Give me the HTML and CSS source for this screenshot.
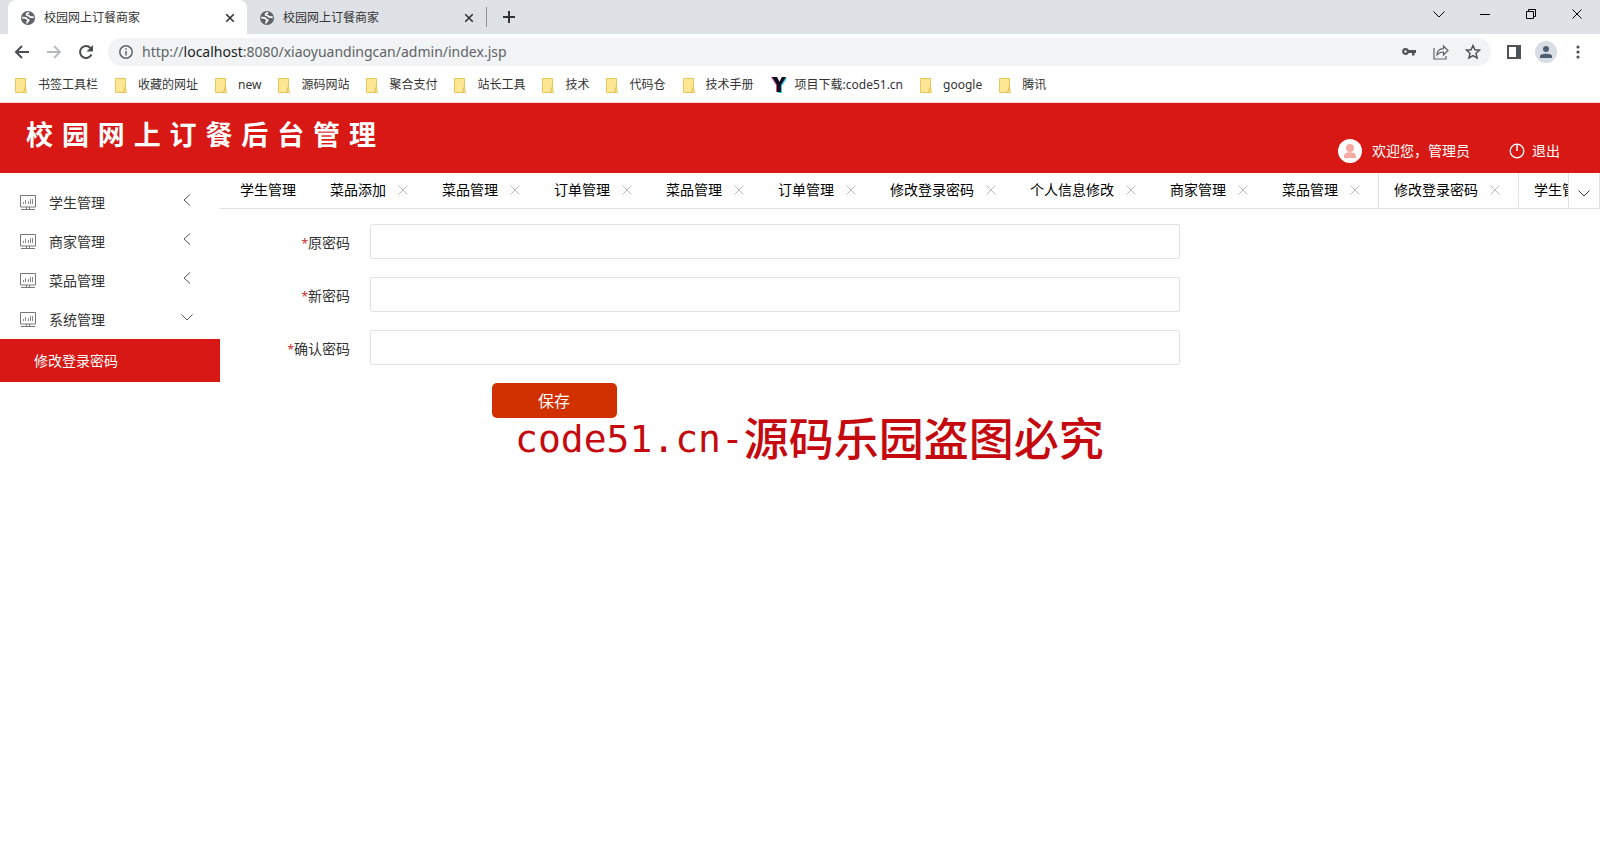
FILE: index.html
```html
<!DOCTYPE html>
<html lang="zh-CN">
<head>
<meta charset="utf-8">
<title>校园网上订餐商家</title>
<link rel="stylesheet" href="styles.css">
</head>
<body>
<svg class="defs" aria-hidden="true">
  <symbol id="globe" viewBox="0 0 16 16"><circle cx="8" cy="8" r="7" fill="#5f6368"/><path d="M2.200 7.600l3 .3c1.500.2 1.300 1.400 2.500 1.600 1.500.2 1.300 1.500 0 1.800-.8.200-.7 1-.7 2.300M8.800 2.200c-.3 1.300-2.600.8-2.300 2.300.3 1.300 2 .3 2.600 1.500.5 1.100 1.500 1.300 2.500 1l2.200.5" fill="none" stroke="#fff" stroke-width="1.700"/></symbol>
  <symbol id="folder" viewBox="0 0 12 15"><path d="M.5.5h10v9l1 5H.5z" fill="#ffe694" stroke="#e8c75c"/><path d="M10.500 8l-2 6.500" stroke="#e0b94a"/></symbol>
  <symbol id="cross" viewBox="0 0 12 12"><path d="M1.500 1.500l9 9M10.500 1.500l-9 9" fill="none" stroke="currentColor"/></symbol>
  <symbol id="left" viewBox="0 0 12 12"><path d="M9 .5L3 6l6 5.500" fill="none" stroke="currentColor"/></symbol>
  <symbol id="down" viewBox="0 0 12 12"><path d="M.5 3.500L6 9l5.500-5.500" fill="none" stroke="currentColor"/></symbol>
  <symbol id="monitor" viewBox="0 0 16 16"><path d="M.5.500h15v11.500H.5zM6.500 12v2M9.500 12v2M1 14.500h14" fill="none" stroke="#777"/><path d="M3.500 9V7M5.500 9V5M8.500 9V6M10.500 9V4M12.500 9V4" fill="none" stroke="#888"/></symbol>
</svg>

<div class="tabstrip">
  <div class="tab tab-active"><svg class="i16"><use href="#globe"/></svg><span class="tab-title">校园网上订餐商家</span><button class="bare" aria-label="关闭标签页"><svg class="i10 bold"><use href="#cross"/></svg></button></div>
  <div class="tab"><svg class="i16"><use href="#globe"/></svg><span class="tab-title">校园网上订餐商家</span><button class="bare" aria-label="关闭标签页"><svg class="i10 bold"><use href="#cross"/></svg></button></div>
  <button class="bare newtab" aria-label="新标签页"><svg class="i12" viewBox="0 0 12 12"><path d="M6 0v12M0 6h12" stroke="#333" stroke-width="2"/></svg></button>
  <div class="window-buttons">
    <button class="bare" aria-label="搜索标签页"><svg class="i12"><use href="#down"/></svg></button>
    <button class="bare" aria-label="最小化"><svg class="i12" viewBox="0 0 12 12"><path d="M1 6.500h10" stroke="#000"/></svg></button>
    <button class="bare" aria-label="还原"><svg class="i12" viewBox="0 0 12 12"><path d="M1.500 3.500h7v7h-7zM3.500 3.500v-2h7v7h-2" fill="none" stroke="#000"/></svg></button>
    <button class="bare" aria-label="关闭"><svg class="i12"><use href="#cross"/></svg></button>
  </div>
</div>

<div class="toolbar">
  <button class="bare" aria-label="后退"><svg class="i16" viewBox="0 0 16 16"><path d="M15 8H2M8 2L2 8l6 6" fill="none" stroke="#4a4d51" stroke-width="2"/></svg></button>
  <button class="bare" aria-label="前进"><svg class="i16" viewBox="0 0 16 16"><path d="M1 8h13M8 2l6 6-6 6" fill="none" stroke="#b8babd" stroke-width="1.800"/></svg></button>
  <button class="bare" aria-label="刷新"><svg class="i16" viewBox="0 0 16 16"><path d="M13.500 10.500A6 6 0 1 1 12.500 4" fill="none" stroke="#4a4d51" stroke-width="2"/><path d="M15 1v6.500H8.500z" fill="#4a4d51"/></svg></button>
  <div class="address">
    <svg class="i14" viewBox="0 0 14 14"><circle cx="7" cy="7" r="6.200" fill="none" stroke="#5f6368" stroke-width="1.500"/><path d="M7 6v4.500M7 3.300v1.500" stroke="#5f6368" stroke-width="1.500"/></svg>
    <span class="url">http://<b>localhost</b>:8080/xiaoyuandingcan/admin/index.jsp</span>
    <div class="address-icons">
      <svg class="i16" viewBox="0 0 16 16"><path d="M4.500 4a3.500 3.500 0 1 0 3.300 5H11v2.500h2.500V9H15V6H7.800a3.500 3.500 0 0 0-3.300-2zm0 2.200a1.300 1.300 0 1 1 0 2.600 1.300 1.300 0 0 1 0-2.600z" fill="#4f5256"/></svg>
      <svg class="i16" viewBox="0 0 16 16"><path d="M1 4v11h12v-3" fill="none" stroke="#5f6368" stroke-width="1.200"/><path d="M4 11c0-4 2-6 6.500-6.300V2L15 6.500 10.500 11V8C7.500 8 5.500 9 4 11z" fill="none" stroke="#5f6368" stroke-width="1.200"/></svg>
      <svg class="i16" viewBox="0 0 16 16"><path d="M8 1.500l1.900 4.300 4.600.4-3.500 3.100 1.100 4.600L8 11.500l-4.100 2.400L5 9.300 1.500 6.200l4.600-.4z" fill="none" stroke="#4f5256" stroke-width="1.500"/></svg>
    </div>
  </div>
  <div class="toolbar-icons">
    <svg class="i14" viewBox="0 0 14 14"><path d="M1 1h12v12H1z" fill="#fff" stroke="#4f5256" stroke-width="2"/><path d="M9 0h5v14H9z" fill="#4f5256"/></svg>
    <svg class="i22" viewBox="0 0 22 22"><circle cx="11" cy="11" r="11" fill="#d9dde4"/><circle cx="11" cy="8" r="3" fill="#4f5f72"/><path d="M5 17v-2c0-3 12-3 12 0v2z" fill="#4f5f72"/></svg>
    <svg class="i14" viewBox="0 0 14 14"><g fill="#4f5256"><circle cx="7" cy="2" r="1.600"/><circle cx="7" cy="7" r="1.600"/><circle cx="7" cy="12" r="1.600"/></g></svg>
  </div>
</div>

<nav class="bookmarks">
  <a href="#"><svg class="folder"><use href="#folder"/></svg>书签工具栏</a>
  <a href="#"><svg class="folder"><use href="#folder"/></svg>收藏的网址</a>
  <a href="#"><svg class="folder"><use href="#folder"/></svg>new</a>
  <a href="#"><svg class="folder"><use href="#folder"/></svg>源码网站</a>
  <a href="#"><svg class="folder"><use href="#folder"/></svg>聚合支付</a>
  <a href="#"><svg class="folder"><use href="#folder"/></svg>站长工具</a>
  <a href="#"><svg class="folder"><use href="#folder"/></svg>技术</a>
  <a href="#"><svg class="folder"><use href="#folder"/></svg>代码仓</a>
  <a href="#"><svg class="folder"><use href="#folder"/></svg>技术手册</a>
  <a class="site" href="#"><svg class="i16" viewBox="0 0 16 16"><path d="M0 0h5l3 5 3-5h4l-5 8v7H5V8z" fill="#f0457a"/><path d="M2 1h4l3 5 3-5h4l-5 8v7H7V9z" fill="#35d0e0"/><path d="M1 0h5l2.500 5L11 0h4l-5 8v7H6V8z" fill="#101025"/></svg>项目下载:code51.cn</a>
  <a href="#"><svg class="folder"><use href="#folder"/></svg>google</a>
  <a href="#"><svg class="folder"><use href="#folder"/></svg>腾讯</a>
</nav>

<header class="header">
  <h1 class="brand">校园网上订餐后台管理</h1>
  <div class="user">
    <svg class="i24" viewBox="0 0 24 24"><circle cx="12" cy="12" r="12" fill="#fff"/><circle cx="12" cy="9" r="4" fill="#f5aaa2"/><path d="M6 19v-2c0-5 12-5 12 0v2z" fill="#f5aaa2"/></svg>
    <span>欢迎您，管理员</span>
    <a class="logout" href="#"><svg class="i16" viewBox="0 0 16 16"><circle cx="8" cy="8" r="6.800" fill="none" stroke="#fff" stroke-width="1.300"/><path d="M8 1v7" stroke="#fff" stroke-width="1.500"/></svg>退出</a>
  </div>
</header>

<div class="body">
  <aside class="sidebar">
    <a class="menu" href="#"><svg class="i16"><use href="#monitor"/></svg><span>学生管理</span><svg class="i12 arrow"><use href="#left"/></svg></a>
    <a class="menu" href="#"><svg class="i16"><use href="#monitor"/></svg><span>商家管理</span><svg class="i12 arrow"><use href="#left"/></svg></a>
    <a class="menu" href="#"><svg class="i16"><use href="#monitor"/></svg><span>菜品管理</span><svg class="i12 arrow"><use href="#left"/></svg></a>
    <a class="menu" href="#"><svg class="i16"><use href="#monitor"/></svg><span>系统管理</span><svg class="i12 arrow"><use href="#down"/></svg></a>
    <a class="submenu" href="#">修改登录密码</a>
  </aside>
  <main class="main">
    <div class="page-tabs">
      <div class="page-list">
        <div class="page-tab first">学生管理</div>
        <div class="page-tab">菜品添加<button class="bare" aria-label="关闭"><svg class="i12"><use href="#cross"/></svg></button></div>
        <div class="page-tab">菜品管理<button class="bare" aria-label="关闭"><svg class="i12"><use href="#cross"/></svg></button></div>
        <div class="page-tab">订单管理<button class="bare" aria-label="关闭"><svg class="i12"><use href="#cross"/></svg></button></div>
        <div class="page-tab">菜品管理<button class="bare" aria-label="关闭"><svg class="i12"><use href="#cross"/></svg></button></div>
        <div class="page-tab">订单管理<button class="bare" aria-label="关闭"><svg class="i12"><use href="#cross"/></svg></button></div>
        <div class="page-tab">修改登录密码<button class="bare" aria-label="关闭"><svg class="i12"><use href="#cross"/></svg></button></div>
        <div class="page-tab">个人信息修改<button class="bare" aria-label="关闭"><svg class="i12"><use href="#cross"/></svg></button></div>
        <div class="page-tab">商家管理<button class="bare" aria-label="关闭"><svg class="i12"><use href="#cross"/></svg></button></div>
        <div class="page-tab">菜品管理<button class="bare" aria-label="关闭"><svg class="i12"><use href="#cross"/></svg></button></div>
        <div class="page-tab current">修改登录密码<button class="bare" aria-label="关闭"><svg class="i12"><use href="#cross"/></svg></button></div>
        <div class="page-tab">学生管理</div>
      </div>
      <button class="bare more" aria-label="更多"><svg class="i12"><use href="#down"/></svg></button>
    </div>
    <form class="form">
      <div class="row"><label for="old"><i>*</i>原密码</label><input id="old" type="password"></div>
      <div class="row"><label for="new"><i>*</i>新密码</label><input id="new" type="password"></div>
      <div class="row"><label for="again"><i>*</i>确认密码</label><input id="again" type="password"></div>
      <button class="save" type="button">保存</button>
    </form>
    <div class="watermark"><span class="mono">code51.cn-</span><span>源码乐园盗图必究</span></div>
  </main>
</div>
</body>
</html>
```

FILE: styles.css
```css
* { box-sizing: border-box; }
body {
  margin: 0;
  min-height: 100vh;
  background: #fff;
  color: #333;
  font: 14px/20px "Noto Sans", "Noto Sans CJK SC", sans-serif;
  overflow: hidden;
}
a { color: inherit; text-decoration: none; }
svg { display: block; flex: none; }
.defs { position: absolute; width: 0; height: 0; }
.bare { display: block; padding: 0; border: 0; background: none; color: inherit; font: inherit; }
.i10 { width: 10px; height: 10px; }
.i12 { width: 12px; height: 12px; }
.i14 { width: 14px; height: 14px; }
.i16 { width: 16px; height: 16px; }
.i22 { width: 22px; height: 22px; }
.i24 { width: 24px; height: 24px; }
.bold { stroke-width: 2; }

.tabstrip { display: flex; height: 34px; padding-left: 8px; background: #dee1e6; }
.tab {
  display: flex;
  align-items: center;
  width: 239px;
  padding: 1px 12px 0 12px;
  font-size: 12px;
}
.tab-active { border-radius: 8px 8px 0 0; background: #fff; }
.tab-title { flex: 1; padding-left: 8px; }
.newtab { align-self: center; height: 20px; padding-left: 16px; border-left: 1px solid #8b8e93; }
.window-buttons { display: flex; align-items: center; gap: 34px; margin-left: auto; padding: 0 17px 6px 0; color: #000; }

.toolbar { display: flex; align-items: center; gap: 16px; height: 36px; padding: 0 15px 0 14px; }
.address {
  display: flex;
  flex: 1;
  align-items: center;
  height: 28px;
  margin-left: -2px;
  padding: 0 10px 0 11px;
  border-radius: 14px;
  background: #f1f3f4;
}
.url { padding-left: 9px; color: #606367; }
.url b { color: #202124; font-weight: 400; }
.address-icons { display: flex; gap: 16px; margin-left: auto; }
.toolbar-icons { display: flex; align-items: center; gap: 14px; }

.bookmarks {
  display: flex;
  align-items: center;
  gap: 17px;
  height: 33px;
  padding: 0 15px 2px;
  border-bottom: 1px solid #f3d4d2;
  font-size: 12px;
}
.bookmarks a { display: flex; align-items: center; gap: 11px; }
.bookmarks .site { gap: 8px; }
.folder { width: 12px; height: 15px; }

.header {
  display: flex;
  justify-content: space-between;
  height: 70px;
  padding: 0 40px 0 26px;
  background: #d81814;
  color: #fff;
}
.brand {
  width: 350px;
  margin: 14px 0 0;
  font-size: 27px;
  line-height: 36px;
  font-weight: 700;
  text-align-last: justify;
}
.user { display: flex; align-items: center; gap: 10px; padding-top: 26px; }
.logout { display: flex; align-items: center; gap: 7px; margin-left: 29px; }

.body { display: flex; }
.sidebar { width: 220px; padding-top: 10px; }
.menu { display: flex; align-items: center; height: 39px; padding: 0 27px 0 20px; }
.menu span { flex: 1; padding-left: 13px; }
.arrow { margin-bottom: 6px; color: #555; }
.submenu { display: block; padding: 12px 34px 11px; background: #d81814; color: #fff; }

.main { position: relative; flex: 1; min-width: 0; }
.page-tabs { display: flex; height: 36px; border-bottom: 1px solid #e2e2e2; color: #000; }
.page-list { display: flex; flex: 1; min-width: 0; padding-left: 4px; overflow: hidden; }
.page-tab {
  display: flex;
  flex: none;
  align-items: center;
  gap: 11px;
  padding: 0 16px 2px 15px;
  border-left: 1px solid transparent;
}
.page-tab .bare { padding-right: 1px; color: #bbb; }
.page-tab.first { padding-right: 18px; }
.page-tab.current, .page-tab.current + .page-tab { border-left-color: #e2e2e2; }
.more { width: 32px; padding: 4px 0 0 9px; border: solid #e2e2e2; border-width: 0 1px; color: #333; }

.form { padding: 15px 15px 0; }
.row { display: flex; margin-bottom: 18px; }
.row label { width: 10%; padding: 9px 20px 0 0; text-align: right; white-space: nowrap; }
.row i { color: #c9302c; font-size: 12px; font-style: normal; }
.row input { width: 60%; height: 35px; padding: 0 10px; border: 1px solid #e2e2e2; border-radius: 2px; background: #fff; }
.save {
  display: block;
  width: 125px;
  height: 35px;
  margin-left: 19%;
  padding: 0;
  border: 0;
  border-radius: 5px;
  background: #d13000;
  color: #fff;
  font: 16px/35px "Noto Sans CJK SC", sans-serif;
}
.watermark {
  position: absolute;
  top: 236px;
  left: 295px;
  display: flex;
  align-items: center;
  color: #c40a0e;
  font-size: 45px;
  font-weight: 500;
  line-height: 60px;
  white-space: nowrap;
}
.mono { font-family: "DejaVu Sans Mono", monospace; font-size: 38px; }
```
